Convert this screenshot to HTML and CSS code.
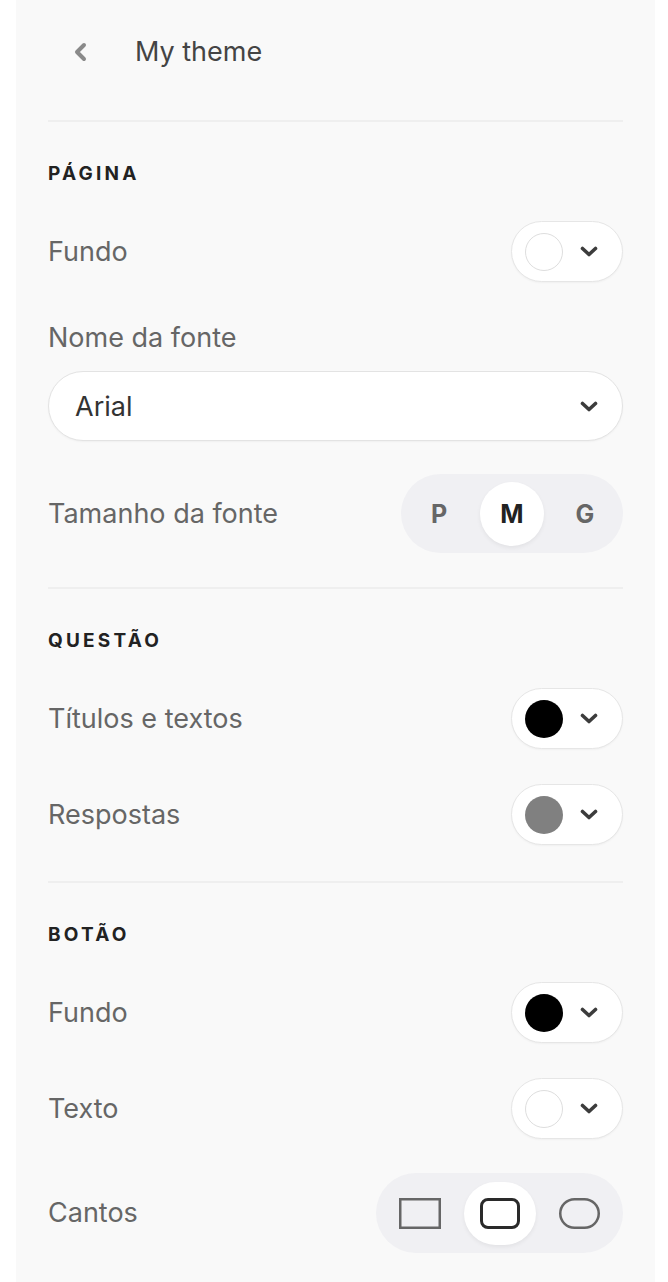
FILE: index.html
```html
<!DOCTYPE html>
<html lang="pt">
<head>
<meta charset="utf-8">
<title>My theme</title>
<link rel="stylesheet" href="styles.css">
</head>
<body>
<div class="panel">
  <header class="header">
    <button class="back" aria-label="Voltar">
      <svg width="14" height="20" viewBox="0 0 14 20"><polyline points="11,3 4,10 11,17" fill="none" stroke="#8a8a8a" stroke-width="4" stroke-linecap="round" stroke-linejoin="round"/></svg>
    </button>
    <h1 class="title">My theme</h1>
  </header>
  <div class="divider"></div>

  <section class="section">
    <h2 class="section-title">PÁGINA</h2>
    <div class="rows">
      <div class="row">
        <span class="label">Fundo</span>
        <div class="color-pill"><span class="swatch swatch-white"></span><svg class="chev" width="18" height="11" viewBox="0 0 18 11"><polyline points="2.5,2.5 9,8.5 15.5,2.5" fill="none" stroke="#3c3c3c" stroke-width="3.6" stroke-linecap="round" stroke-linejoin="round"/></svg></div>
      </div>
      <div class="field">
        <span class="label field-label">Nome da fonte</span>
        <div class="select"><span class="select-value">Arial</span><svg class="chev" width="18" height="11" viewBox="0 0 18 11"><polyline points="2.5,2.5 9,8.5 15.5,2.5" fill="none" stroke="#3c3c3c" stroke-width="3.6" stroke-linecap="round" stroke-linejoin="round"/></svg></div>
      </div>
      <div class="row row-seg">
        <span class="label">Tamanho da fonte</span>
        <div class="seg seg-size">
          <span class="seg-item">P</span>
          <span class="seg-item active">M</span>
          <span class="seg-item">G</span>
        </div>
      </div>
    </div>
  </section>
  <div class="divider"></div>

  <section class="section section-pills">
    <h2 class="section-title">QUESTÃO</h2>
    <div class="rows">
      <div class="row">
        <span class="label">Títulos e textos</span>
        <div class="color-pill"><span class="swatch swatch-black"></span><svg class="chev" width="18" height="11" viewBox="0 0 18 11"><polyline points="2.5,2.5 9,8.5 15.5,2.5" fill="none" stroke="#3c3c3c" stroke-width="3.6" stroke-linecap="round" stroke-linejoin="round"/></svg></div>
      </div>
      <div class="row">
        <span class="label">Respostas</span>
        <div class="color-pill"><span class="swatch swatch-gray"></span><svg class="chev" width="18" height="11" viewBox="0 0 18 11"><polyline points="2.5,2.5 9,8.5 15.5,2.5" fill="none" stroke="#3c3c3c" stroke-width="3.6" stroke-linecap="round" stroke-linejoin="round"/></svg></div>
      </div>
    </div>
  </section>
  <div class="divider"></div>

  <section class="section">
    <h2 class="section-title">BOTÃO</h2>
    <div class="rows">
      <div class="row">
        <span class="label">Fundo</span>
        <div class="color-pill"><span class="swatch swatch-black"></span><svg class="chev" width="18" height="11" viewBox="0 0 18 11"><polyline points="2.5,2.5 9,8.5 15.5,2.5" fill="none" stroke="#3c3c3c" stroke-width="3.6" stroke-linecap="round" stroke-linejoin="round"/></svg></div>
      </div>
      <div class="row">
        <span class="label">Texto</span>
        <div class="color-pill"><span class="swatch swatch-white"></span><svg class="chev" width="18" height="11" viewBox="0 0 18 11"><polyline points="2.5,2.5 9,8.5 15.5,2.5" fill="none" stroke="#3c3c3c" stroke-width="3.6" stroke-linecap="round" stroke-linejoin="round"/></svg></div>
      </div>
      <div class="row row-seg-corners">
        <span class="label">Cantos</span>
        <div class="seg seg-corners">
          <span class="seg-item"><svg width="42" height="31" viewBox="0 0 42 31"><rect x="1.25" y="1.25" width="39.5" height="28.5" fill="none" stroke="#666" stroke-width="2.5"/></svg></span>
          <span class="seg-item active"><svg width="40" height="31" viewBox="0 0 40 31"><rect x="1.5" y="1.5" width="37" height="28" rx="6.5" fill="none" stroke="#2a2a2a" stroke-width="3"/></svg></span>
          <span class="seg-item"><svg width="41" height="31" viewBox="0 0 41 31"><rect x="1.25" y="1.25" width="38.5" height="28.5" rx="14.25" fill="none" stroke="#666" stroke-width="2.5"/></svg></span>
        </div>
      </div>
    </div>
  </section>
</div>
</body>
</html>
```

FILE: styles.css
```css
* { box-sizing: border-box; }

html, body {
  margin: 0;
  padding: 0;
  background: #ffffff;
}

body {
  font-family: Inter, "Noto Sans", "Liberation Sans", sans-serif;
  color: #666;
}

.panel {
  margin-left: 16px;
  width: 639px;
  min-height: 1282px;
  background: #f9f9f9;
  padding: 0 32px 40px 32px;
}

.header {
  height: 104px;
  display: flex;
  align-items: center;
  padding-left: 25px;
}

.back {
  border: 0;
  background: none;
  padding: 0;
  width: 14px;
  height: 20px;
  display: flex;
  cursor: pointer;
}

.title {
  margin: 0 0 0 48px;
  font-size: 27px;
  font-weight: 400;
  color: #444;
  line-height: 32px;
}

.divider {
  height: 2px;
  background: #efefef;
}

.header + .divider { margin-top: 16px; }

.section {
  padding: 40px 0 34px;
}

.section-pills { padding-bottom: 36px; }

.section-title {
  margin: 0 0 35px;
  font-size: 19px;
  line-height: 24px;
  font-weight: 700;
  letter-spacing: 3.2px;
  color: #222;
}

.rows {
  display: flex;
  flex-direction: column;
  gap: 35px;
}

.row,
.row-seg,
.row-seg-corners {
  display: flex;
  align-items: center;
  justify-content: space-between;
}

.row-seg { margin-top: -2px; }
.row-seg-corners { margin-top: -1px; }

.label {
  font-size: 27px;
  line-height: 36px;
  color: #666;
}

.field {
  display: flex;
  flex-direction: column;
}

.field-label { margin: 3px 0 15px; }

.color-pill {
  width: 112px;
  height: 61px;
  border-radius: 31px;
  background: #fff;
  border: 1px solid #e6e6e6;
  box-shadow: 0 1px 2px rgba(0,0,0,0.04);
  display: flex;
  align-items: center;
  padding: 0 24px 0 13px;
  justify-content: space-between;
}

.swatch {
  width: 38px;
  height: 38px;
  border-radius: 50%;
  display: block;
}

.swatch-white { background: #fff; border: 1.5px solid #dedede; }
.swatch-black { background: #000; }
.swatch-gray { background: #808080; }

.chev { display: block; }

.select {
  height: 70px;
  border-radius: 35px;
  background: #fff;
  border: 1px solid #e3e3e3;
  box-shadow: 0 1px 2px rgba(0,0,0,0.04);
  display: flex;
  align-items: center;
  justify-content: space-between;
  padding: 0 24px 0 26px;
}

.select-value {
  font-size: 27px;
  line-height: 36px;
  padding-top: 2px;
  color: #333;
}

.seg {
  display: flex;
  align-items: center;
  background: #f0f0f3;
  border-radius: 40px;
}

.seg-size {
  width: 222px;
  height: 79px;
  padding: 0 6px;
  gap: 9px;
}

.seg-size .seg-item {
  width: 64px;
  height: 64px;
  border-radius: 50%;
  display: flex;
  align-items: center;
  justify-content: center;
  font-size: 25px;
  font-weight: 700;
  color: #666;
}

.seg-corners {
  width: 247px;
  height: 80px;
  padding: 0 7.5px;
  gap: 8px;
}

.seg-corners .seg-item {
  width: 72px;
  height: 63px;
  border-radius: 32px;
  display: flex;
  align-items: center;
  justify-content: center;
}

.seg-item.active {
  background: #fff;
  color: #222;
  box-shadow: 0 2px 4px rgba(0,0,0,0.06);
}
```
